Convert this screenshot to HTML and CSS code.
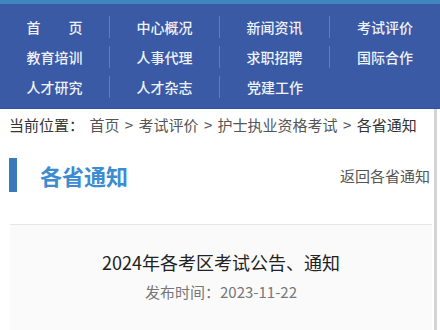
FILE: index.html
```html
<!DOCTYPE html>
<html lang="zh">
<head>
<meta charset="utf-8">
<link rel="stylesheet" href="styles.css">
</head>
<body>
<div class="topstrip"></div>
<nav class="nav">
  <a class="nav-item">首　　页</a>
  <a class="nav-item">中心概况</a>
  <a class="nav-item">新闻资讯</a>
  <a class="nav-item">考试评价</a>
  <a class="nav-item">教育培训</a>
  <a class="nav-item">人事代理</a>
  <a class="nav-item">求职招聘</a>
  <a class="nav-item">国际合作</a>
  <a class="nav-item">人才研究</a>
  <a class="nav-item">人才杂志</a>
  <a class="nav-item">党建工作</a>
</nav>
<main class="main">
  <div class="crumb">
    <span class="crumb-label">当前位置：</span>
    <span class="crumb-link">首页</span>
    <span class="crumb-sep">&gt;</span>
    <span class="crumb-link">考试评价</span>
    <span class="crumb-sep">&gt;</span>
    <span class="crumb-link">护士执业资格考试</span>
    <span class="crumb-sep">&gt;</span>
    <span class="crumb-current">各省通知</span>
  </div>
  <div class="section-head">
    <span class="bar"></span>
    <h1 class="section-title">各省通知</h1>
    <a class="back">返回各省通知</a>
  </div>
  <div class="article">
    <h2 class="article-title">2024年各考区考试公告、通知</h2>
    <p class="article-date">发布时间：2023-11-22</p>
  </div>
</main>
</body>
</html>
```

FILE: styles.css
```css
* { box-sizing: border-box; }
html, body { margin: 0; padding: 0; }
body {
  width: 440px;
  height: 330px;
  overflow: hidden;
  background: #fff;
  font-family: "Noto Sans CJK SC", "Noto Sans", sans-serif;
}
.topstrip {
  height: 4px;
  background: #3f86bd;
}
.nav {
  display: grid;
  grid-template-columns: repeat(4, 110px);
  grid-auto-rows: 30px;
  padding: 8px 0 6px;
  background: #3a5aa5;
  border-bottom: 1px solid #34509a;
}
.nav-item {
  margin: 4px 0;
  height: 22px;
  line-height: 22px;
  text-align: center;
  font-size: 14px;
  font-weight: 500;
  color: #eef2fa;
  border-right: 1px solid #5f7dc0;
  white-space: pre;
}
.nav-item:nth-child(4n), .nav-item:last-child {
  border-right: none;
}
.main {
  border-right: 3px solid #d4d4d4;
  margin-right: 3px;
  min-height: 230px;
}
.crumb {
  padding: 4px 0 0 9px;
  height: 34px;
  line-height: 24px;
  font-size: 15px;
  color: #555;
  white-space: nowrap;
}
.crumb-label { color: #333; margin-right: 2px; }
.crumb-sep { color: #555; margin: 0 2px; }
.crumb-current { color: #333; }
.section-head {
  display: flex;
  align-items: center;
  margin-top: 15px;
  padding: 0 4px 0 9px;
  height: 34px;
}
.bar {
  width: 8px;
  height: 34px;
  background: #3a79bb;
}
.section-title {
  margin: 0 0 0 23px;
  font-size: 22px;
  font-weight: 700;
  color: #3d8bd0;
  flex: 1;
}
.back {
  font-size: 15px;
  color: #555;
}
.article {
  margin: 32px 2px 0 10px;
  border-top: 1px solid #e6e6e6;
  background: #fafafa;
  text-align: center;
  padding-top: 22px;
  height: 120px;
}
.article-title {
  margin: 0;
  font-size: 18px;
  font-weight: 400;
  color: #222;
  line-height: 30px;
}
.article-date {
  margin: 3px 0 0;
  font-size: 15px;
  color: #777;
  line-height: 24px;
}
```
